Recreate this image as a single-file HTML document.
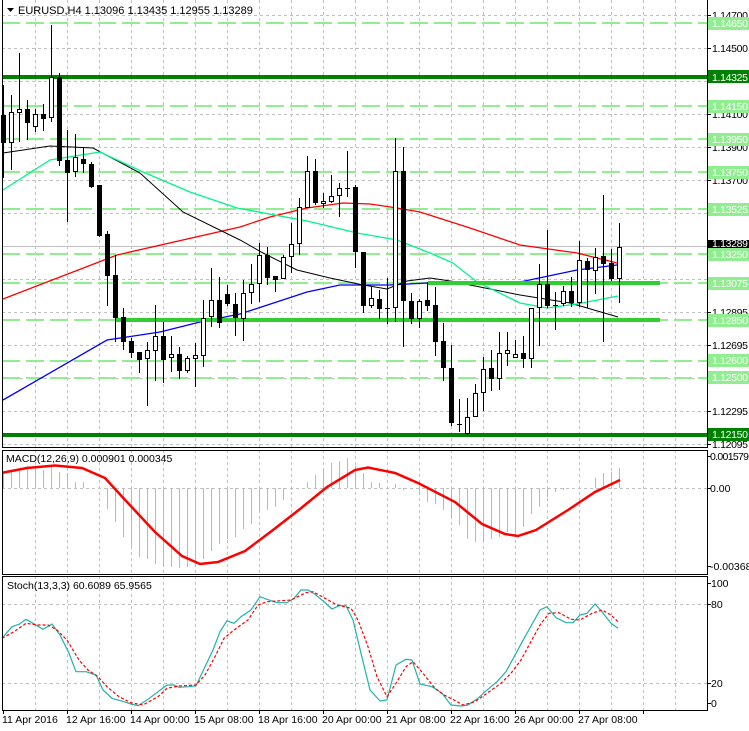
<!DOCTYPE html>
<html><head><meta charset="utf-8"><style>
html,body{margin:0;padding:0;background:#fff;}
svg{display:block;font-family:"Liberation Sans",sans-serif;font-size:11px;}
</style></head><body>
<svg width="749" height="731" viewBox="0 0 749 731" xmlns="http://www.w3.org/2000/svg">
<rect width="749" height="731" fill="#fff"/>
<g stroke="#c0c0c0" stroke-dasharray="3,3" shape-rendering="crispEdges">
<path d="M35.5 0V710M67.5 0V710M99.5 0V710M131.5 0V710M163.5 0V710M195.5 0V710M227.5 0V710M259.5 0V710M291.5 0V710M323.5 0V710M355.5 0V710M387.5 0V710M419.5 0V710M451.5 0V710M483.5 0V710M515.5 0V710M547.5 0V710M579.5 0V710M611.5 0V710M643.5 0V710M675.5 0V710"/>
<path d="M2 15.5H707M2 48.5H707M2 81.5H707M2 114.5H707M2 147.5H707M2 180.5H707M2 213.5H707M2 279.5H707M2 312.5H707M2 345.5H707M2 378.5H707M2 411.5H707M2 444.5H707"/>
<path d="M2 488.5H707M2 604.5H707M2 683.5H707"/>
</g>
<path d="M2 246.5H707" stroke="#c0c0c0" shape-rendering="crispEdges"/>
<g stroke="#90ee90" stroke-width="2" stroke-dasharray="18,6" shape-rendering="crispEdges">
<path d="M2 23H707M2 106H707M2 139H707M2 172H707M2 209H707M2 254H707M2 283H707M2 320H707M2 361H707M2 378H707"/>
</g>
<g fill="none" stroke-width="1.3">
<polyline stroke="#ff0000" points="3,299 117,255 240,227 270,217 307,208 343,203 370,204 397,208 420,212 470,228 520,245 577,253 617,263"/>
<polyline stroke="#0000ff" points="3,400 107,340 160,332 200,322 240,314 307,292 340,285 390,285 427,283 520,282 577,270 617,265"/>
<polyline stroke="#000" stroke-width="1" points="3,153 50,146 93,148 140,173 183,212 240,240 263,253 297,270 330,278 363,285 387,289 407,281 430,278 457,282 470,285 520,295 570,303 618,317"/>
<polyline stroke="#00f58a" points="3,190 50,160 100,152 143,172 190,192 237,208 307,221 357,233 397,240 430,253 453,263 477,282 520,303 547,308 577,304 618,296"/>
</g>
<g shape-rendering="crispEdges">
<rect x="2" y="75" width="705" height="4" fill="#008000"/>
<rect x="2" y="433" width="705" height="4" fill="#008000"/>
<rect x="428" y="281" width="232" height="4" fill="#32cd32"/>
<rect x="115" y="318" width="545" height="4" fill="#32cd32"/>
</g>
<g stroke="#000" shape-rendering="crispEdges">
<path d="M3.5 85V178M11.5 95V170M19.5 53V142M27.5 100V140M35.5 109V132M43.5 104V131M51.5 25V122M59.5 73V166M67.5 130V222M75.5 134V177M83.5 147V173M91.5 162V188M99.5 185V237M107.5 231V306M115.5 255V342M123.5 308V350M131.5 338V358M139.5 352V373M147.5 342V406M155.5 305V381M163.5 322V383M171.5 336V372M179.5 347V379M187.5 356V373M195.5 343V387M203.5 300V367M211.5 268V327M219.5 277V328M227.5 285V306M235.5 293V336M243.5 280V341M251.5 264V304M259.5 243V302M267.5 247V285M275.5 276V292M283.5 255V279M291.5 223V273M299.5 198V255M307.5 156V208M315.5 159V205M323.5 193V208M331.5 175V203M339.5 183V217M347.5 151V197M355.5 185V268M363.5 252V313M371.5 287V308M379.5 290V319M387.5 278V324M395.5 138V322M403.5 147V347M411.5 293V324M419.5 299V328M427.5 282V311M435.5 287V356M443.5 323V381M451.5 345V426M459.5 399V432M467.5 398V435M475.5 384V417M483.5 357V411M491.5 350V391M499.5 332V390M507.5 332V366M515.5 340V358M523.5 336V368M531.5 308V368M539.5 264V346M547.5 230V308M555.5 292V330M563.5 286V306M571.5 277V307M579.5 241V307M587.5 258V308M595.5 248V294M603.5 195V342M611.5 249V281M619.5 223V303"/>
<path d="M345 188.5H350M385 308.5H390M457 424.5H462M553 305.5H558"/>
</g>
<g stroke="#000" fill="#000" shape-rendering="crispEdges">
<rect x="1.5" y="115.5" width="4" height="27"/><rect x="25.5" y="109.5" width="4" height="13"/><rect x="41.5" y="114.5" width="4" height="4"/><rect x="57.5" y="77.5" width="4" height="83"/><rect x="65.5" y="160.5" width="4" height="12"/><rect x="81.5" y="159.5" width="4" height="4"/><rect x="89.5" y="164.5" width="4" height="22"/><rect x="97.5" y="185.5" width="4" height="50"/><rect x="105.5" y="234.5" width="4" height="41"/><rect x="113.5" y="275.5" width="4" height="42"/><rect x="121.5" y="317.5" width="4" height="24"/><rect x="129.5" y="341.5" width="4" height="11"/><rect x="137.5" y="352.5" width="4" height="7"/><rect x="161.5" y="336.5" width="4" height="23"/><rect x="177.5" y="354.5" width="4" height="16"/><rect x="217.5" y="300.5" width="4" height="22"/><rect x="225.5" y="294.5" width="4" height="9"/><rect x="233.5" y="304.5" width="4" height="13"/><rect x="265.5" y="255.5" width="4" height="22"/><rect x="273.5" y="276.5" width="4" height="3"/><rect x="313.5" y="171.5" width="4" height="31"/><rect x="353.5" y="187.5" width="4" height="64"/><rect x="361.5" y="252.5" width="4" height="53"/><rect x="377.5" y="299.5" width="4" height="9"/><rect x="401.5" y="171.5" width="4" height="129"/><rect x="409.5" y="301.5" width="4" height="17"/><rect x="425.5" y="300.5" width="4" height="5"/><rect x="433.5" y="305.5" width="4" height="36"/><rect x="441.5" y="341.5" width="4" height="26"/><rect x="449.5" y="368.5" width="4" height="54"/><rect x="489.5" y="368.5" width="4" height="10"/><rect x="521.5" y="353.5" width="4" height="5"/><rect x="545.5" y="284.5" width="4" height="21"/><rect x="569.5" y="291.5" width="4" height="11"/><rect x="585.5" y="261.5" width="4" height="8"/><rect x="601.5" y="256.5" width="4" height="7"/><rect x="609.5" y="263.5" width="4" height="15"/>
</g>
<g stroke="#000" fill="#fff" shape-rendering="crispEdges">
<rect x="9.5" y="112.5" width="4" height="30"/><rect x="17.5" y="109.5" width="4" height="3"/><rect x="33.5" y="114.5" width="4" height="12"/><rect x="49.5" y="77.5" width="4" height="40"/><rect x="73.5" y="157.5" width="4" height="14"/><rect x="145.5" y="350.5" width="4" height="8"/><rect x="153.5" y="336.5" width="4" height="14"/><rect x="169.5" y="354.5" width="4" height="3"/><rect x="185.5" y="358.5" width="4" height="12"/><rect x="193.5" y="355.5" width="4" height="3"/><rect x="201.5" y="318.5" width="4" height="37"/><rect x="209.5" y="300.5" width="4" height="16"/><rect x="241.5" y="293.5" width="4" height="25"/><rect x="249.5" y="284.5" width="4" height="8"/><rect x="257.5" y="255.5" width="4" height="28"/><rect x="281.5" y="257.5" width="4" height="21"/><rect x="289.5" y="244.5" width="4" height="12"/><rect x="297.5" y="207.5" width="4" height="36"/><rect x="305.5" y="171.5" width="4" height="36"/><rect x="321.5" y="201.5" width="4" height="2"/><rect x="329.5" y="196.5" width="4" height="5"/><rect x="337.5" y="188.5" width="4" height="7"/><rect x="369.5" y="298.5" width="4" height="7"/><rect x="393.5" y="171.5" width="4" height="136"/><rect x="417.5" y="301.5" width="4" height="17"/><rect x="465.5" y="417.5" width="4" height="16"/><rect x="473.5" y="393.5" width="4" height="23"/><rect x="481.5" y="369.5" width="4" height="23"/><rect x="497.5" y="353.5" width="4" height="25"/><rect x="505.5" y="350.5" width="4" height="3"/><rect x="513.5" y="354.5" width="4" height="3"/><rect x="529.5" y="308.5" width="4" height="50"/><rect x="537.5" y="284.5" width="4" height="23"/><rect x="561.5" y="291.5" width="4" height="12"/><rect x="577.5" y="260.5" width="4" height="42"/><rect x="593.5" y="257.5" width="4" height="13"/><rect x="617.5" y="247.5" width="4" height="31"/>
</g>
<g stroke="#b8b8b8" shape-rendering="crispEdges">
<path d="M3.5 488V473M11.5 488V472M19.5 488V469M27.5 488V466M35.5 488V468M43.5 488V470M51.5 488V465M59.5 488V472M67.5 488V473M75.5 488V482M83.5 488V482M107.5 488V509M115.5 488V522M123.5 488V537M131.5 488V547M139.5 488V557M147.5 488V559M155.5 488V564M163.5 488V567M171.5 488V567M179.5 488V568M187.5 488V567M195.5 488V566M203.5 488V559M211.5 488V551M219.5 488V544M227.5 488V539M235.5 488V537M243.5 488V529M251.5 488V524M259.5 488V512M267.5 488V510M275.5 488V507M283.5 488V500M291.5 488V490M307.5 488V482M315.5 488V475M323.5 488V470M331.5 488V463M339.5 488V461M347.5 488V458M355.5 488V466M363.5 488V473M371.5 488V482M379.5 488V483M395.5 488V484M403.5 488V490M419.5 488V495M427.5 488V502M435.5 488V504M443.5 488V510M451.5 488V517M459.5 488V525M467.5 488V539M475.5 488V542M483.5 488V541M491.5 488V539M499.5 488V537M507.5 488V532M515.5 488V534M523.5 488V527M531.5 488V514M539.5 488V507M547.5 488V497M555.5 488V492M563.5 488V490M595.5 488V478M603.5 488V473M611.5 488V472M619.5 488V468"/>
</g>
<polyline fill="none" stroke="#ff0000" stroke-width="2.5" points="3,472.6 27,468 55,465.5 82,468 105,478 127,502 155,532 182,556 200,564 218,562 245,551 273,530 300,509 327,487 355,470 368,467.5 395,473 418,483 455,502 482,524 505,534 518,536 536,530 568,510 595,492 620,480"/>
<polyline fill="none" stroke="#20b2aa" stroke-width="1.2" points="2,638.3 12,626.7 19,624.3 26,619.3 33,623.3 43,629.3 52,624 60,635 69,653.3 76,671.7 86,671.7 96,675 103,690 112,698.3 124,701.7 131,704 138,705.7 148,699.3 158,691.7 167,685 174,685 179,687.3 189,686.7 196,685.7 205,666.7 213,650 220,631.7 227,620.7 234,623.3 241,616.7 251,610 260,596.7 267,599.3 277,602.7 287,602.7 294,598.3 301,590 308,590 315,594.3 325,602.7 332,609 339,605.7 346,605.7 353,620 361,653.3 370,690 380,701 387,700 396,665 406,659.3 412,660 420,684 432,686.7 442,693.3 451,705 461,706 468,705 478,698.3 485,691.7 497,681.7 506,671.7 516,653.3 525,636.7 540,610 547,606.7 556,617.7 566,622.7 573,622.7 580,615 587,613.3 595,604 602,611.7 611,623.3 618,628.3"/>
<polyline fill="none" stroke="#ff0000" stroke-width="1.2" stroke-dasharray="3,2" points="2,638.3 14,631.7 26,623.3 38,625 48,625 57,630 67,640 79,660 88,670 98,676.7 107,686.7 119,696.7 131,702.7 143,705 158,696.7 167,688.3 179,686 196,685 205,675 215,656.7 224,638.3 234,630 248,620 258,605 267,601.7 282,600.7 291,600 306,592.7 313,591.7 325,598.3 337,605 351,608.3 358,620 368,646.7 377,676.7 387,696.7 396,683.3 406,666.7 413,661.7 423,673.3 435,688.3 444,695 454,700 463,705 475,701.7 487,693.3 501,683.3 511,673.3 521,660 530,643.3 540,625 549,613.3 559,612.7 571,619.3 580,620 592,613.3 602,610 611,615 618,621.7"/>
<g fill="none" stroke="#000" shape-rendering="crispEdges">
<path d="M2.5 0V447.5H707.5V0"/>
<path d="M2.5 450.5H707.5V574.5H2.5Z"/>
<path d="M2.5 576.5H707.5V710.5H2.5Z"/>
<path d="M707 15.5h4M707 48.5h4M707 81.5h4M707 114.5h4M707 147.5h4M707 180.5h4M707 213.5h4M707 246.5h4M707 279.5h4M707 312.5h4M707 345.5h4M707 378.5h4M707 411.5h4M707 444.5h4M707 456.5h4M707 488.5h4M707 566.5h4M707 583.5h4M707 604.5h4M707 683.5h4M707 703.5h4"/>
<path d="M3.5 710v4M67.5 710v4M131.5 710v4M195.5 710v4M259.5 710v4M323.5 710v4M387.5 710v4M451.5 710v4M515.5 710v4M579.5 710v4M643.5 710v4"/>
</g>
<path d="M7 8h7l-3.5 4z" fill="#000"/>
<text x="18" y="14" fill="#000">EURUSD,H4  1.13096 1.13435 1.12955 1.13289</text>
<text x="6" y="462" fill="#000" font-size="10.5">MACD(12,26,9) 0.000901 0.000345</text>
<text x="7" y="589" fill="#000" font-size="10.5">Stoch(13,3,3) 60.6089 65.9565</text>
<g fill="#000" font-size="10.5">
<text x="712" y="19" textLength="36">1.14700</text><text x="712" y="52" textLength="36">1.14500</text><text x="712" y="118" textLength="36">1.14100</text><text x="712" y="151" textLength="36">1.13900</text><text x="712" y="184" textLength="36">1.13700</text><text x="712" y="316" textLength="36">1.12895</text><text x="712" y="349" textLength="36">1.12695</text><text x="712" y="415" textLength="36">1.12295</text><text x="712" y="448" textLength="36">1.12095</text>
<text x="710" y="460" textLength="39">0.001579</text><text x="710" y="492">0.00</text><text x="710" y="570">-0.003683</text>
<text x="711" y="587">100</text><text x="711" y="608">80</text><text x="711" y="687">20</text><text x="711" y="707">0</text>
</g>
<g shape-rendering="crispEdges">
<rect x="708" y="17" width="41" height="13" fill="#90ee90"/>
<rect x="708" y="70" width="41" height="13" fill="#008000"/>
<rect x="708" y="100" width="41" height="13" fill="#90ee90"/>
<rect x="708" y="133" width="41" height="13" fill="#90ee90"/>
<rect x="708" y="166" width="41" height="13" fill="#90ee90"/>
<rect x="708" y="203" width="41" height="13" fill="#90ee90"/>
<rect x="708" y="240" width="41" height="8" fill="#000"/>
<rect x="708" y="248" width="41" height="13" fill="#90ee90"/>
<rect x="708" y="277" width="41" height="13" fill="#90ee90"/>
<rect x="708" y="314" width="41" height="13" fill="#90ee90"/>
<rect x="708" y="354" width="41" height="13" fill="#90ee90"/>
<rect x="708" y="371" width="41" height="13" fill="#90ee90"/>
<rect x="708" y="428" width="41" height="13" fill="#008000"/>
</g>
<g fill="#fff" font-size="10.5">
<text x="712" y="27" textLength="36">1.14650</text><text x="712" y="81" textLength="36">1.14325</text><text x="712" y="110" textLength="36">1.14150</text><text x="712" y="143" textLength="36">1.13950</text><text x="712" y="176" textLength="36">1.13750</text><text x="712" y="213" textLength="36">1.13525</text><text x="712" y="247" textLength="36">1.13289</text><text x="712" y="258" textLength="36">1.13250</text><text x="712" y="287" textLength="36">1.13075</text><text x="712" y="324" textLength="36">1.12850</text><text x="712" y="364" textLength="36">1.12600</text><text x="712" y="381" textLength="36">1.12500</text><text x="712" y="438" textLength="36">1.12150</text>
</g>
<g fill="#000" font-size="10.5">
<text x="2" y="723">11 Apr 2016</text><text x="66" y="723">12 Apr 16:00</text><text x="130" y="723">14 Apr 00:00</text><text x="194" y="723">15 Apr 08:00</text><text x="258" y="723">18 Apr 16:00</text><text x="322" y="723">20 Apr 00:00</text><text x="386" y="723">21 Apr 08:00</text><text x="450" y="723">22 Apr 16:00</text><text x="514" y="723">26 Apr 00:00</text><text x="578" y="723">27 Apr 08:00</text>
</g>
</svg>
</body></html>
